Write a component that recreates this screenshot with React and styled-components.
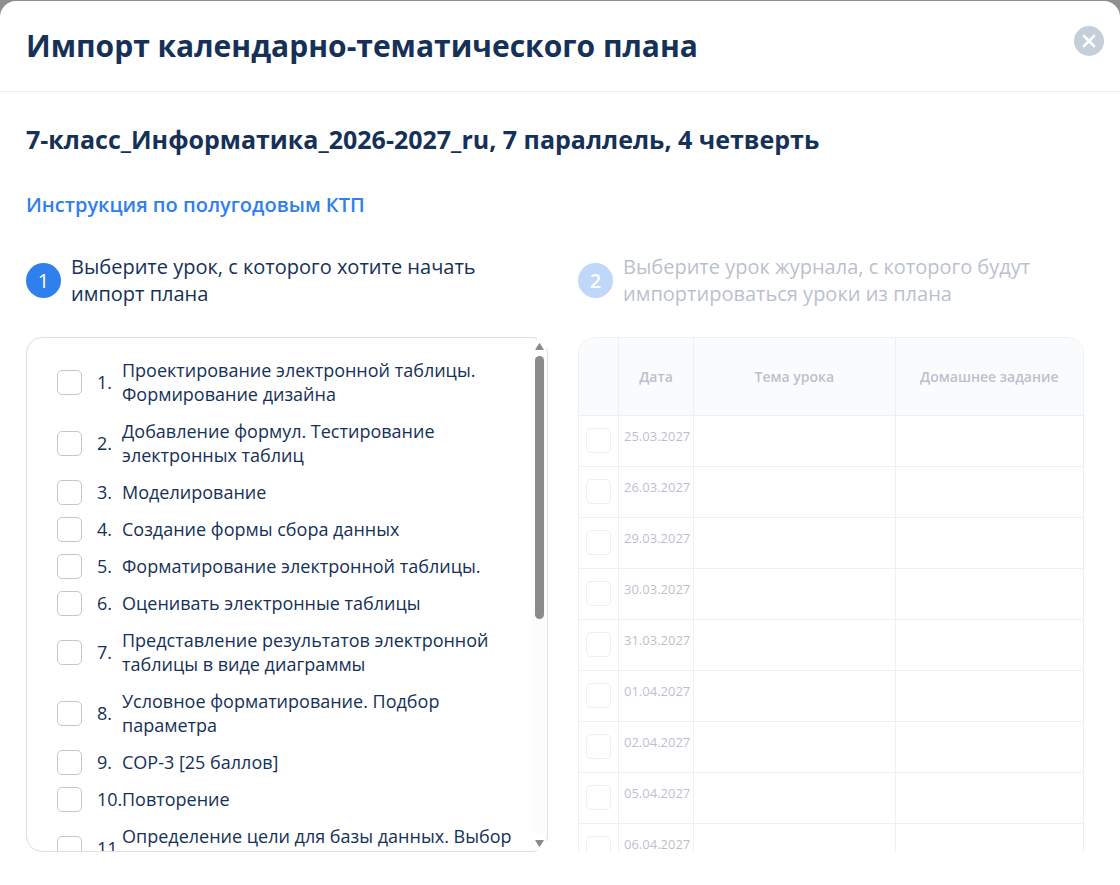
import { useState } from "react";
import styled, { createGlobalStyle } from "styled-components";

const COLOR_WHITE = "#fff";
const COLOR_PRIMARY = "#2f80ed";
const COLOR_TEXT = "#153157";
const COLOR_BORDER = "#dcdfe3";

const GlobalStyle = createGlobalStyle`
  * {
    box-sizing: border-box;
  }

  body {
    margin: 0;
    background: #8f8f8f;
    color: ${COLOR_TEXT};
    font-family: "Open Sans", "Noto Sans", sans-serif;
  }
`;

const Modal = styled.section`
  margin-top: 1px;
  min-height: calc(100vh - 1px);
  background: ${COLOR_WHITE};
  border-radius: 16px 16px 0 0;
`;

const ModalHeader = styled.header`
  display: flex;
  align-items: flex-start;
  justify-content: space-between;
  padding: 25px 16px 25px 26px;
  border-bottom: 1px solid #ececec;
`;

const ModalTitle = styled.h1`
  margin: 0;
  font-size: 30px;
  line-height: 40px;
  font-weight: 700;
`;

const CloseButton = styled.button`
  display: flex;
  align-items: center;
  justify-content: center;
  width: 30px;
  height: 30px;
  padding: 0;
  border: none;
  border-radius: 50%;
  background: #c5cfda;
  cursor: pointer;
`;

const ModalBody = styled.div`
  padding: 29px 36px 33px 26px;
`;

const PlanTitle = styled.h2`
  margin: 0 0 34px;
  font-size: 25px;
  line-height: 36px;
  font-weight: 700;
`;

const GuideLink = styled.a`
  display: inline-block;
  color: ${COLOR_PRIMARY};
  font-size: 20px;
  line-height: 28px;
  font-weight: 600;
  text-decoration: none;
`;

const Steps = styled.div`
  display: grid;
  grid-template-columns: 522fr 506fr;
  column-gap: 30px;
  margin-top: 34px;
`;

const Step = styled.section`
  min-width: 0;
  opacity: ${({ $disabled }) => ($disabled ? 0.3 : 1)};
`;

const StepHeader = styled.div`
  display: flex;
  align-items: center;
  margin-bottom: 30px;
`;

const StepNumber = styled.span`
  display: flex;
  flex: none;
  align-items: center;
  justify-content: center;
  width: 35px;
  height: 35px;
  margin-right: 10px;
  border-radius: 50%;
  background: ${COLOR_PRIMARY};
  color: ${COLOR_WHITE};
  font-size: 20px;
  line-height: 27px;
  font-weight: ${({ $bold }) => ($bold ? 600 : 400)};
`;

const StepText = styled.h3`
  margin: 0;
  font-size: 20px;
  line-height: 27px;
  font-weight: 400;
`;

const LessonsPanel = styled.div`
  position: relative;
  display: flex;
  height: calc(100vh - 370px);
  border: 1px solid ${COLOR_BORDER};
  border-radius: 16px;

  &::before,
  &::after {
    content: "";
    position: absolute;
    right: -1px;
    width: 11px;
    height: 11px;
    background: ${COLOR_WHITE};
  }

  &::before {
    top: -1px;
  }

  &::after {
    bottom: -1px;
  }
`;

const LessonsList = styled.ol`
  flex: 1;
  min-width: 0;
  margin: 0;
  padding: 20px 15px 0 30px;
  overflow-y: auto;
  scrollbar-width: none;
  list-style: none;
`;

const LessonItem = styled.li`
  margin-bottom: 13px;
`;

const LessonLabel = styled.label`
  display: flex;
  align-items: center;
  font-size: 18px;
  line-height: 24px;
  cursor: pointer;
`;

const Checkbox = styled.input.attrs({ type: "checkbox" })`
  display: block;
  flex: none;
  appearance: none;
  width: 25px;
  height: 25px;
  margin: -1px 0;
  border: 1px solid #c3c8d0;
  border-radius: 5px;
  background: ${COLOR_WHITE};

  &:checked {
    background: ${COLOR_PRIMARY};
  }
`;

const LessonNumber = styled.span`
  flex: none;
  width: 25px;
  margin-left: 15px;
`;

const Scrollbar = styled.div`
  position: relative;
  z-index: 1;
  display: flex;
  flex-direction: column;
  align-items: center;
  width: 15px;
  padding: 5px 0 4px;
`;

const ScrollTrack = styled.div`
  flex: 1;
  width: 15px;
  margin: 6px 0;
  padding: 0 3px;
  background: #fcfcfc;
`;

const ScrollThumb = styled.div`
  height: 55%;
  border-radius: 5px;
  background: #8b8b8b;
`;

const JournalPanel = styled.div`
  height: calc(100vh - 370px);
  border-radius: 16px 16px 0 0;
  overflow-y: auto;
  scrollbar-width: none;
`;

const JournalTable = styled.table`
  width: 100%;
  border: 1px solid #c8ccd2;
  border-radius: 16px 16px 0 0;
  border-spacing: 0;
  table-layout: fixed;
`;

const HeadCell = styled.th`
  width: ${({ $width }) => $width || "auto"};
  height: 78px;
  padding: 0;
  border-right: 1px solid #c8ccd2;
  border-bottom: 1px solid #c8ccd2;
  background: #f0f4fb;
  font-size: 14px;
  line-height: 20px;
  font-weight: 600;

  &:first-child {
    border-top-left-radius: 15px;
  }

  &:last-child {
    border-right: none;
    border-top-right-radius: 15px;
  }
`;

const Cell = styled.td`
  height: 51px;
  padding: 0 0 2px 7px;
  border-right: 1px solid #c8ccd2;
  border-bottom: 1px solid #c8ccd2;

  &:last-child {
    border-right: none;
  }
`;

const DateCell = styled(Cell)`
  padding: 10px 0 0 5px;
  font-size: 13px;
  line-height: 20px;
  vertical-align: top;
`;

const LESSONS = [
  "Проектирование электронной таблицы. Формирование дизайна",
  "Добавление формул. Тестирование электронных таблиц",
  "Моделирование",
  "Создание формы сбора данных",
  "Форматирование электронной таблицы.",
  "Оценивать электронные таблицы",
  "Представление результатов электронной таблицы в виде диаграммы",
  "Условное форматирование. Подбор параметра",
  "СОР-3 [25 баллов]",
  "Повторение",
  "Определение цели для базы данных. Выбор данных",
];

const DATES = [
  "25.03.2027",
  "26.03.2027",
  "29.03.2027",
  "30.03.2027",
  "31.03.2027",
  "01.04.2027",
  "02.04.2027",
  "05.04.2027",
  "06.04.2027",
];

function ScrollArrow({ down }) {
  return (
    <svg width="9" height="7" viewBox="0 0 9 7" aria-hidden="true">
      <path
        d={down ? "M0.7 0.5h7.6L4.5 6.5z" : "M0.7 6.5h7.6L4.5 0.5z"}
        fill="#8b8b8b"
        stroke="#8b8b8b"
        strokeLinejoin="round"
      />
    </svg>
  );
}

export default function App() {
  const [selected, setSelected] = useState(null);

  function handleLessonChange(index) {
    setSelected(selected === index ? null : index);
  }

  return (
    <>
      <GlobalStyle />
      <Modal role="dialog" aria-labelledby="modal-title">
        <ModalHeader>
          <ModalTitle id="modal-title">
            Импорт календарно-тематического плана
          </ModalTitle>
          <CloseButton type="button" aria-label="Закрыть">
            <svg width="14" height="14" viewBox="0 0 14 14" fill="none">
              <path
                d="M2 2l10 10M12 2L2 12"
                stroke="#fff"
                strokeWidth="2.6"
                strokeLinecap="round"
              />
            </svg>
          </CloseButton>
        </ModalHeader>
        <ModalBody>
          <PlanTitle>
            7-класс_Информатика_2026-2027_ru, 7 параллель, 4 четверть
          </PlanTitle>
          <GuideLink href="#guide">Инструкция по полугодовым КТП</GuideLink>
          <Steps>
            <Step>
              <StepHeader>
                <StepNumber>1</StepNumber>
                <StepText>
                  Выберите урок, с которого хотите начать импорт плана
                </StepText>
              </StepHeader>
              <LessonsPanel>
                <LessonsList>
                  {LESSONS.map((lesson, index) => (
                    <LessonItem key={`lesson-${index}`}>
                      <LessonLabel>
                        <Checkbox
                          checked={selected === index}
                          onChange={() => handleLessonChange(index)}
                        />
                        <LessonNumber>{index + 1}.</LessonNumber>
                        <span>{lesson}</span>
                      </LessonLabel>
                    </LessonItem>
                  ))}
                </LessonsList>
                <Scrollbar aria-hidden="true">
                  <ScrollArrow />
                  <ScrollTrack>
                    <ScrollThumb />
                  </ScrollTrack>
                  <ScrollArrow down />
                </Scrollbar>
              </LessonsPanel>
            </Step>
            <Step $disabled>
              <StepHeader>
                <StepNumber $bold>2</StepNumber>
                <StepText>
                  Выберите урок журнала, с которого будут импортироваться уроки
                  из плана
                </StepText>
              </StepHeader>
              <JournalPanel>
                <JournalTable>
                  <thead>
                    <tr>
                      <HeadCell $width="40px" aria-label="Выбор" />
                      <HeadCell $width="75px">Дата</HeadCell>
                      <HeadCell $width="40%">Тема урока</HeadCell>
                      <HeadCell>Домашнее задание</HeadCell>
                    </tr>
                  </thead>
                  <tbody>
                    {DATES.map((date) => (
                      <tr key={date}>
                        <Cell>
                          <Checkbox disabled aria-label={date} />
                        </Cell>
                        <DateCell>{date}</DateCell>
                        <Cell />
                        <Cell />
                      </tr>
                    ))}
                  </tbody>
                </JournalTable>
              </JournalPanel>
            </Step>
          </Steps>
        </ModalBody>
      </Modal>
    </>
  );
}
